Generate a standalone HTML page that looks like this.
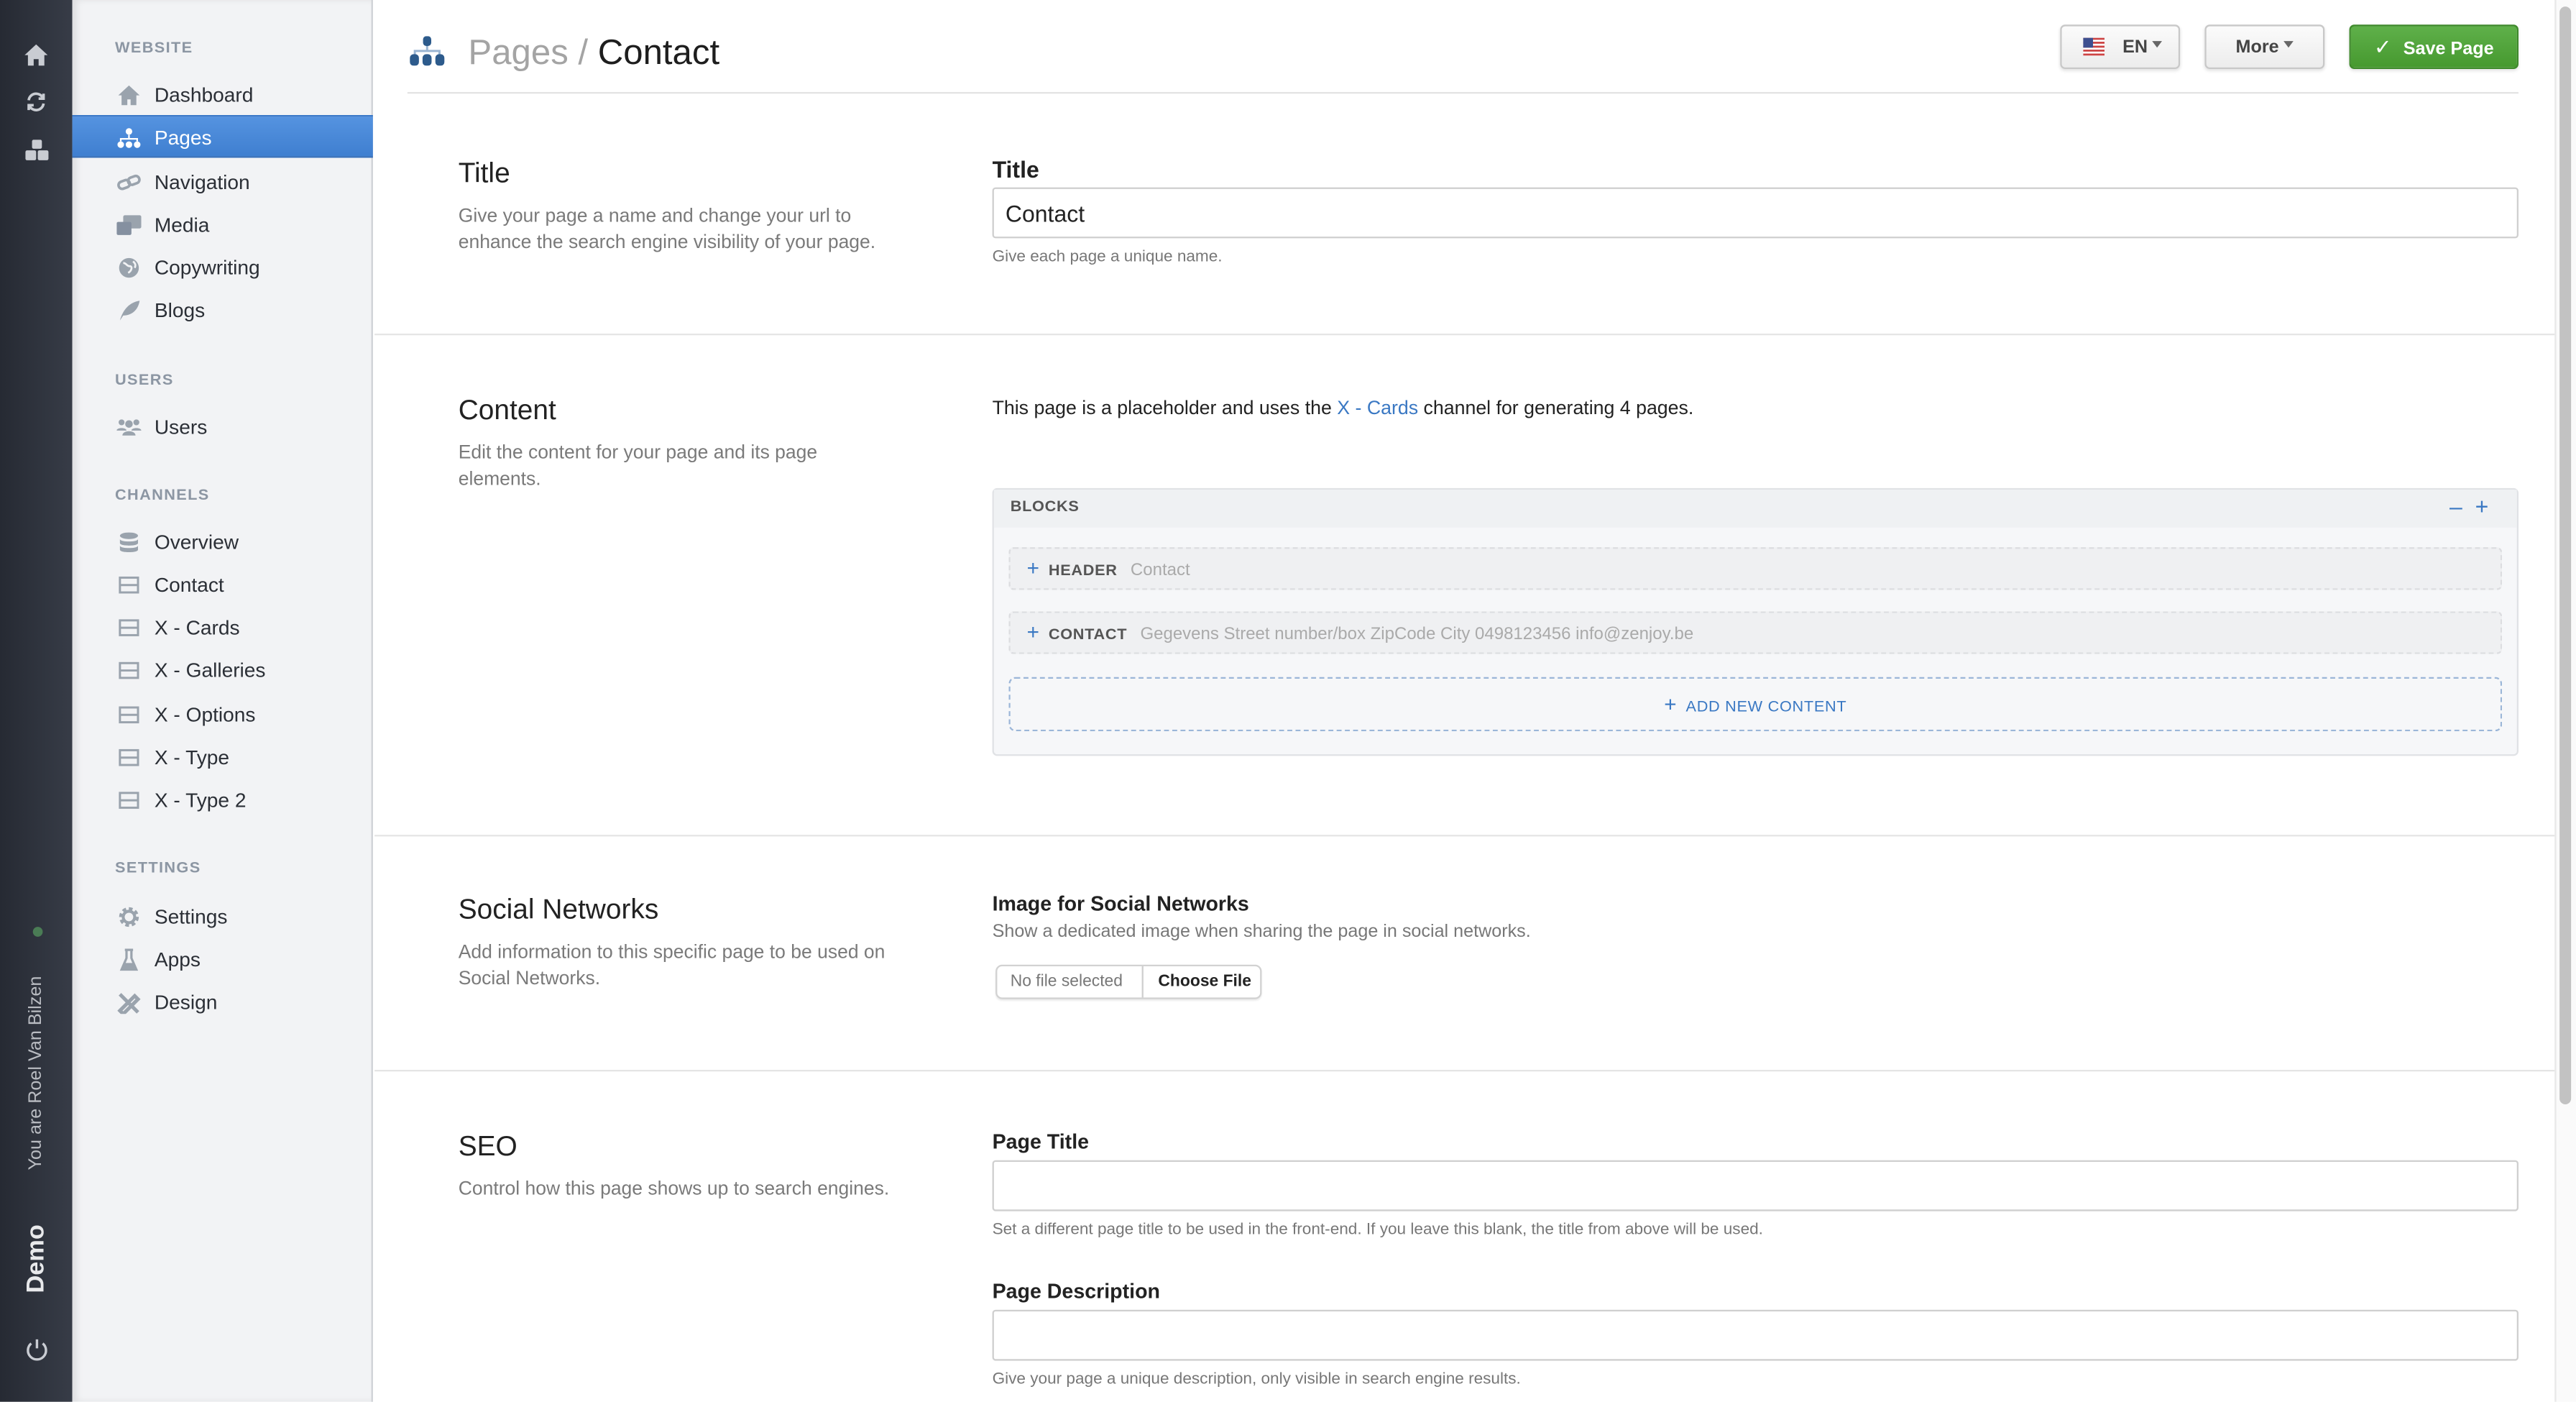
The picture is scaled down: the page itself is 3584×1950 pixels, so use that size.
<!DOCTYPE html>
<html><head><meta charset="utf-8"><style>
*{margin:0;padding:0;box-sizing:border-box}
html,body{width:3584px;height:1948px;overflow:hidden;background:#fff}
#w{position:absolute;left:0;top:0;width:1568px;height:852.3px;transform:scale(2.285714);transform-origin:0 0;font-family:"Liberation Sans",sans-serif;color:#222}
.a{position:absolute;white-space:nowrap}
.dark{position:absolute;left:0;top:0;width:44px;height:853px;background:linear-gradient(90deg,#262a33,#373c47)}
.side{position:absolute;left:44px;top:0;width:183px;height:853px;background:#f2f3f5;border-right:1px solid #cfd2d6;box-shadow:inset 3px 0 4px rgba(0,0,0,.08)}
.sh{position:absolute;left:70px;font-size:9.5px;font-weight:bold;color:#8c96a3;letter-spacing:.6px;line-height:12px}
.it{position:absolute;left:94px;font-size:12.3px;color:#2b2f36;line-height:16px}
.ic{position:absolute;left:71px;width:15px;height:14px}
.act{position:absolute;left:44px;top:70px;width:183px;height:26px;background:linear-gradient(#5593e0,#3f7fd0);border-top:1px solid #3a78c8;border-bottom:1px solid #336cb8}
.sep{position:absolute;left:228px;width:1327px;height:1px;background:#e5e5e5}
.h2{position:absolute;left:279px;font-size:17px;color:#222;line-height:20px}
.d{position:absolute;left:279px;font-size:11.6px;color:#7a7a7a;line-height:16px}
.lb{position:absolute;left:604px;font-size:12.5px;font-weight:bold;color:#222;line-height:16px}
.inp{position:absolute;left:604px;width:929px;height:31px;border:1px solid #cfcfcf;border-radius:2px;background:#fff}
.hp{position:absolute;left:604px;font-size:9.9px;color:#777;line-height:12px}
.btn{position:absolute;top:15px;height:27px;border:1px solid #c8c8c8;border-radius:3px;background:linear-gradient(#fbfbfb,#ececec);box-shadow:0 1px 2px rgba(0,0,0,.12);font-size:11px;font-weight:bold;color:#444;line-height:26px}
.tri{display:inline-block;width:0;height:0;border-left:3px solid transparent;border-right:3px solid transparent;border-top:4px solid #666;vertical-align:3px;margin-left:3px}
.row{position:absolute;left:614px;width:909px;background:#eff0f2;border:1px dashed #dcdde0;border-radius:3px;font-size:9.5px;line-height:24px}
</style></head><body><div id="w">
<div class="dark"></div>
<svg class="a" style="left:15px;top:27px" width="14" height="13" viewBox="0 0 14 13"><path d="M7 0L0 6.5h2V13h3.5V9h3v4H12V6.5h2z" fill="#c9ccd2"/></svg>
<svg class="a" style="left:16px;top:56px" width="12" height="12" viewBox="0 0 12 12" fill="none" stroke="#c9ccd2" stroke-width="1.6"><path d="M1.5 5A4.5 4.5 0 0 1 10 3.5M10.5 7A4.5 4.5 0 0 1 2 8.5"/><path d="M10.5 1v3h-3M1.5 11V8h3" /></svg>
<svg class="a" style="left:15px;top:85px" width="15" height="13" viewBox="0 0 15 13" fill="#c9ccd2"><rect x="4.5" y="0" width="6" height="5.5" rx="1"/><rect x="0.5" y="6.5" width="6.5" height="6" rx="1"/><rect x="8" y="6.5" width="6.5" height="6" rx="1"/></svg>
<div class="a" style="left:20px;top:564px;width:6px;height:6px;border-radius:50%;background:#4a7c55"></div>
<div class="a" style="left:22px;top:653px;transform:translate(-50%,-50%) rotate(-90deg);font-size:11px;color:#b9bcc2">You are Roel Van Bilzen</div>
<div class="a" style="left:22px;top:766px;transform:translate(-50%,-50%) rotate(-90deg);font-size:15px;font-weight:bold;color:#e8e9eb">Demo</div>
<svg class="a" style="left:15px;top:814px" width="15" height="15" viewBox="0 0 15 15" fill="none" stroke="#c9ccd2" stroke-width="1.5"><path d="M4 3.5A5.5 5.5 0 1 0 11 3.5"/><path d="M7.5 1v5.5"/></svg>

<div class="side"></div>
<div class="act"></div>
<div class="sh" style="top:24px">WEBSITE</div>
<div class="sh" style="top:226px">USERS</div>
<div class="sh" style="top:296px">CHANNELS</div>
<div class="sh" style="top:523px">SETTINGS</div>

<svg class="ic" style="top:51px" viewBox="0 0 15 14"><path d="M7.5 1L1 7h2v6h3.5V9.5h2V13H12V7h2z" fill="#9aa3ad"/></svg>
<div class="it" style="top:50px">Dashboard</div>
<svg class="ic" style="top:77px" viewBox="0 0 15 14" fill="#fff"><circle cx="7.5" cy="3" r="2"/><path d="M7.5 5v3M2.5 9V7.5h10V9" stroke="#fff" fill="none"/><circle cx="2.5" cy="11" r="2"/><circle cx="7.5" cy="11" r="2"/><circle cx="12.5" cy="11" r="2"/></svg>
<div class="it" style="top:76px;color:#fff">Pages</div>
<svg class="ic" style="top:104px" viewBox="0 0 15 14" fill="none" stroke="#9aa3ad" stroke-width="1.6"><rect x="1" y="6" width="7" height="4.5" rx="2.2" transform="rotate(-20 4.5 8)"/><rect x="7" y="3.5" width="7" height="4.5" rx="2.2" transform="rotate(-20 10.5 6)"/></svg>
<div class="it" style="top:103px">Navigation</div>
<svg class="ic" style="top:130px" viewBox="0 0 15 14" fill="#9aa3ad"><rect x="4" y="1" width="11" height="8" rx="1"/><rect x="0" y="5" width="9" height="8" rx="1" fill="#8590a0"/></svg>
<div class="it" style="top:129px">Media</div>
<svg class="ic" style="top:156px" viewBox="0 0 15 14"><circle cx="7.5" cy="7" r="6" fill="#9aa3ad"/><path d="M4 4c2 0 2 2 4 2s1 3-1 4M10 3c1 1 2 2 1 4" stroke="#f2f3f5" stroke-width="1.2" fill="none"/></svg>
<div class="it" style="top:155px">Copywriting</div>
<svg class="ic" style="top:182px" viewBox="0 0 15 14"><path d="M2 13C4 6 8 2 14 1c-1 6-5 9-10 9z" fill="#9aa3ad"/></svg>
<div class="it" style="top:181px">Blogs</div>
<svg class="ic" style="top:253px" viewBox="0 0 15 14" fill="#9aa3ad"><circle cx="3" cy="4" r="1.8"/><circle cx="12" cy="4" r="1.8"/><circle cx="7.5" cy="5" r="2.3"/><path d="M0 9c0-2 6-2 6 0zM9 9c0-2 6-2 6 0zM3.5 12c0-3.5 8-3.5 8 0z"/></svg>
<div class="it" style="top:252px">Users</div>
<svg class="ic" style="top:323px" viewBox="0 0 15 14" fill="#9aa3ad"><ellipse cx="7.5" cy="3" rx="5.5" ry="2"/><path d="M2 5c0 2 11 2 11 0v2.5c0 2-11 2-11 0zM2 9c0 2 11 2 11 0v2.5c0 2-11 2-11 0z"/></svg>
<div class="it" style="top:322px">Overview</div>
<div class="it" style="top:348px">Contact</div>
<div class="it" style="top:374px">X - Cards</div>
<div class="it" style="top:400px">X - Galleries</div>
<div class="it" style="top:427px">X - Options</div>
<div class="it" style="top:453px">X - Type</div>
<div class="it" style="top:479px">X - Type 2</div>
<svg class="ic" style="top:349px" viewBox="0 0 15 14" fill="none" stroke="#9aa3ad" stroke-width="1.3"><rect x="2" y="2.5" width="11" height="9"/><path d="M2 7h11"/></svg>
<svg class="ic" style="top:375px" viewBox="0 0 15 14" fill="none" stroke="#9aa3ad" stroke-width="1.3"><rect x="2" y="2.5" width="11" height="9"/><path d="M2 7h11"/></svg>
<svg class="ic" style="top:401px" viewBox="0 0 15 14" fill="none" stroke="#9aa3ad" stroke-width="1.3"><rect x="2" y="2.5" width="11" height="9"/><path d="M2 7h11"/></svg>
<svg class="ic" style="top:428px" viewBox="0 0 15 14" fill="none" stroke="#9aa3ad" stroke-width="1.3"><rect x="2" y="2.5" width="11" height="9"/><path d="M2 7h11"/></svg>
<svg class="ic" style="top:454px" viewBox="0 0 15 14" fill="none" stroke="#9aa3ad" stroke-width="1.3"><rect x="2" y="2.5" width="11" height="9"/><path d="M2 7h11"/></svg>
<svg class="ic" style="top:480px" viewBox="0 0 15 14" fill="none" stroke="#9aa3ad" stroke-width="1.3"><rect x="2" y="2.5" width="11" height="9"/><path d="M2 7h11"/></svg>
<svg class="ic" style="top:551px" viewBox="0 0 15 14"><circle cx="7.5" cy="7" r="4.5" fill="none" stroke="#9aa3ad" stroke-width="3" stroke-dasharray="2 1.5"/><circle cx="7.5" cy="7" r="3.5" fill="none" stroke="#9aa3ad" stroke-width="1.8"/></svg>
<div class="it" style="top:550px">Settings</div>
<svg class="ic" style="top:577px" viewBox="0 0 15 14"><path d="M5 1h5M6 1v5L3 13h9L9 6V1" fill="none" stroke="#9aa3ad" stroke-width="1.4"/><path d="M4.5 9h6l1.5 4H3z" fill="#9aa3ad"/></svg>
<div class="it" style="top:576px">Apps</div>
<svg class="ic" style="top:603px" viewBox="0 0 15 14"><path d="M2 12L11 3l2 2-9 9z M2 2l11 11" stroke="#9aa3ad" stroke-width="2.2" fill="none"/></svg>
<div class="it" style="top:602px">Design</div>

<!-- header -->
<svg class="a" style="left:249px;top:22px" width="22" height="18" viewBox="0 0 22 18" fill="#2d5b8c"><rect x="8.5" y="0" width="5" height="6" rx="2"/><path d="M11 6v3M3.5 12V9h15v3" stroke="#9ab5d3" stroke-width="1.3" fill="none"/><rect x="0.5" y="11" width="5.5" height="7" rx="2.2"/><rect x="8.2" y="11" width="5.5" height="7" rx="2.2"/><rect x="16" y="11" width="5.5" height="7" rx="2.2"/></svg>
<div class="a" style="left:285px;top:18px;font-size:21.5px;line-height:28px;color:#a4a4a4">Pages / <span style="color:#1e1e1e">Contact</span></div>
<div class="btn" style="left:1254px;width:73px;padding-left:13px"><svg width="13" height="11" viewBox="0 0 13 11" style="vertical-align:-2px"><rect width="13" height="11" fill="#fff"/><g fill="#c44"><rect y="0" width="13" height="1.2"/><rect y="2.4" width="13" height="1.2"/><rect y="4.8" width="13" height="1.2"/><rect y="7.2" width="13" height="1.2"/><rect y="9.6" width="13" height="1.2"/></g><rect width="6" height="6" fill="#3d4f8f"/></svg><span style="margin-left:11px">EN</span><span class="tri"></span></div>
<div class="btn" style="left:1342px;width:73px;text-align:center">More<span class="tri"></span></div>
<div class="btn" style="left:1430px;width:103px;background:linear-gradient(#5fb04a,#46992f);border-color:#3f8a2c;color:#fff;padding-left:14px"><span style="font-size:13px;font-weight:normal">✓</span><span style="margin-left:7px">Save Page</span></div>
<div class="a" style="left:248px;top:56px;width:1285px;height:1px;background:#e3e3e3"></div>
<!-- scrollbar -->
<div class="a" style="left:1555px;top:0;width:13px;height:853px;background:#fafafa;border-left:1px solid #e8e8e8"></div>
<div class="a" style="left:1558px;top:4px;width:7px;height:668px;background:#c2c2c2;border-radius:4px"></div>

<div class="sep" style="top:203px"></div>
<div class="sep" style="top:508px"></div>
<div class="sep" style="top:651px"></div>

<!-- Title -->
<div class="h2" style="top:96px">Title</div>
<div class="d" style="top:124px">Give your page a name and change your url to<br>enhance the search engine visibility of your page.</div>
<div class="lb" style="top:95px;font-size:14px">Title</div>
<div class="inp" style="top:114px"><div class="a" style="left:7px;top:6px;font-size:14px;line-height:18px;color:#222">Contact</div></div>
<div class="hp" style="top:151px">Give each page a unique name.</div>

<!-- Content -->
<div class="h2" style="top:240px">Content</div>
<div class="d" style="top:268px">Edit the content for your page and its page<br>elements.</div>
<div class="a" style="left:604px;top:241px;font-size:11.7px;line-height:15px;color:#222">This page is a placeholder and uses the <span style="color:#3a78c3">X - Cards</span> channel for generating 4 pages.</div>
<div class="a" style="left:604px;top:297px;width:929px;height:163px;border:1px solid #e0e2e5;border-radius:3px;background:#f6f7f9"></div>
<div class="a" style="left:605px;top:298px;width:927px;height:23px;background:#eff1f3"></div>
<div class="a" style="left:615px;top:302px;font-size:9.5px;font-weight:bold;color:#555;line-height:14px;letter-spacing:.3px">BLOCKS</div>
<div class="a" style="left:1491px;top:299px;font-size:14px;color:#3a78c3;line-height:18px">–&nbsp;&nbsp;+</div>
<div class="row" style="top:333px;height:26px"><span style="color:#3a78c3;font-size:13px;margin-left:10px">+</span> <b style="color:#555;margin-left:3px;letter-spacing:.3px">HEADER</b><span style="color:#aaa;margin-left:8px;font-size:10.5px">Contact</span></div>
<div class="row" style="top:372px;height:26px"><span style="color:#3a78c3;font-size:13px;margin-left:10px">+</span> <b style="color:#555;margin-left:3px;letter-spacing:.3px">CONTACT</b><span style="color:#aaa;margin-left:8px;font-size:10.5px">Gegevens Street number/box ZipCode City 0498123456 info@zenjoy.be</span></div>
<div class="a" style="left:614px;top:412px;width:909px;height:33px;border:1px dashed #9bb6d8;border-radius:4px;text-align:center;line-height:31px;font-size:9.5px;color:#3a78c3;letter-spacing:.3px"><span style="font-size:13px">+</span>&nbsp; ADD NEW CONTENT</div>

<!-- Social -->
<div class="h2" style="top:544px">Social Networks</div>
<div class="d" style="top:572px">Add information to this specific page to be used on<br>Social Networks.</div>
<div class="lb" style="top:542px">Image for Social Networks</div>
<div class="a" style="left:604px;top:560px;font-size:11px;color:#777;line-height:14px">Show a dedicated image when sharing the page in social networks.</div>
<div class="a" style="left:606px;top:587px;width:162px;height:21px;border:1px solid #d2d2d2;border-radius:4px;background:#fff;box-shadow:0 1px 1px rgba(0,0,0,.08);font-size:10px;line-height:19px"><span style="position:absolute;left:8px;color:#777">No file selected</span><span style="position:absolute;left:88px;top:0;height:19px;border-left:1px solid #cfcfcf;padding-left:9px;font-weight:bold;color:#222">Choose File</span></div>

<!-- SEO -->
<div class="h2" style="top:688px">SEO</div>
<div class="d" style="top:716px">Control how this page shows up to search engines.</div>
<div class="lb" style="top:687px">Page Title</div>
<div class="inp" style="top:706px"></div>
<div class="hp" style="top:743px">Set a different page title to be used in the front-end. If you leave this blank, the title from above will be used.</div>
<div class="lb" style="top:778px">Page Description</div>
<div class="inp" style="top:797px"></div>
<div class="hp" style="top:834px">Give your page a unique description, only visible in search engine results.</div>
</div></body></html>
